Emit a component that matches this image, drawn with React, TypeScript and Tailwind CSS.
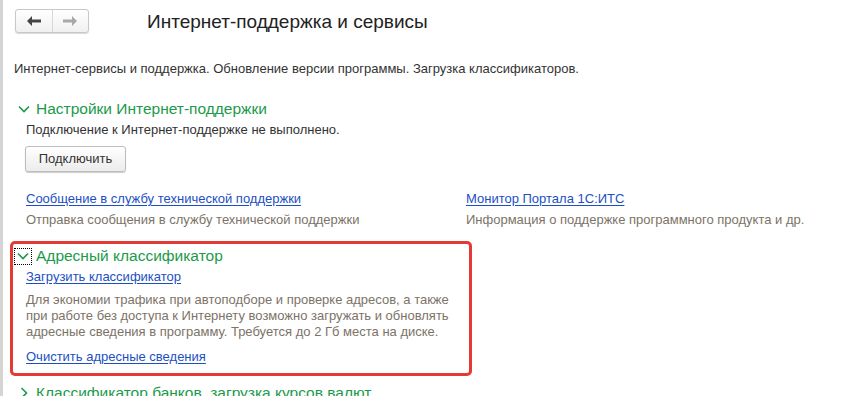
import React from 'react';

const font = { fontFamily: '"Liberation Sans", Arial, sans-serif' };

function ChevronDown() {
  return (
    <svg width="12" height="8" viewBox="0 0 12 8" fill="none">
      <path d="M1 1.5 L6 6.5 L11 1.5" stroke="#1a9a4a" strokeWidth="1.6" />
    </svg>
  );
}

function ChevronRight() {
  return (
    <svg width="8" height="12" viewBox="0 0 8 12" fill="none">
      <path d="M1.5 1 L6.5 6 L1.5 11" stroke="#1a9a4a" strokeWidth="1.6" />
    </svg>
  );
}

function Arrow({ dir, color }: { dir: 'left' | 'right'; color: string }) {
  return (
    <svg width="14" height="10" viewBox="0 0 14 10">
      {dir === 'left' ? (
        <path d="M0 5 L5 0 L5 3.5 L14 3.5 L14 6.5 L5 6.5 L5 10 Z" fill={color} />
      ) : (
        <path d="M14 5 L9 0 L9 3.5 L0 3.5 L0 6.5 L9 6.5 L9 10 Z" fill={color} />
      )}
    </svg>
  );
}

function Link({ children }: { children: React.ReactNode }) {
  return (
    <a className="text-[#1c4fc4] underline underline-offset-2 decoration-[#1c4fc4] cursor-pointer">
      {children}
    </a>
  );
}

export default function App() {
  return (
    <div
      className="w-[868px] h-[396px] overflow-hidden bg-white border-l-[3px] border-[#d4d4d4] text-[13px] text-[#333]"
      style={font}
    >
      {/* header */}
      <div className="flex items-center pt-[9px] pl-[12px]">
        <div className="flex h-[24px] w-[74px] rounded-[3px] border border-[#c8c8c8] bg-gradient-to-b from-white to-[#f0f0f0] shadow-[0_1px_1px_rgba(0,0,0,0.15)]">
          <div className="flex flex-1 items-center justify-center border-r border-[#d8d8d8]">
            <Arrow dir="left" color="#444" />
          </div>
          <div className="flex flex-1 items-center justify-center">
            <Arrow dir="right" color="#a8a8a8" />
          </div>
        </div>
        <h1 className="ml-[58px] text-[19px] text-[#222] leading-none">Интернет-поддержка и сервисы</h1>
      </div>

      <p className="mt-[28px] pl-[11px] leading-[16px]">
        Интернет-сервисы и поддержка. Обновление версии программы. Загрузка классификаторов.
      </p>

      {/* internet support settings */}
      <div className="mt-[22px] pl-[15px] flex items-center gap-[6px]">
        <ChevronDown />
        <span className="text-[15.5px] text-[#1a9a4a] leading-[20px]">Настройки Интернет-поддержки</span>
      </div>
      <p className="mt-[3px] pl-[23px] leading-[16px]">Подключение к Интернет-поддержке не выполнено.</p>
      <div className="pl-[22px] mt-[8px]">
        <button className="h-[26px] w-[101px] rounded-[3px] border border-[#bdbdbd] bg-gradient-to-b from-white to-[#ececec] shadow-[0_1px_1px_rgba(0,0,0,0.2)] text-[#333]">
          Подключить
        </button>
      </div>

      <div className="mt-[19px] flex">
        <div className="w-[463px] pl-[23px]">
          <div className="leading-[16px]"><Link>Сообщение в службу технической поддержки</Link></div>
          <div className="mt-[5px] leading-[16px] text-[#7c7367]">Отправка сообщения в службу технической поддержки</div>
        </div>
        <div>
          <div className="leading-[16px]"><Link>Монитор Портала 1С:ИТС</Link></div>
          <div className="mt-[5px] leading-[16px] text-[#7c7367]">Информация о поддержке программного продукта и др.</div>
        </div>
      </div>

      {/* address classifier, highlighted */}
      <div className="mt-[13px] ml-[7px] w-[462px] h-[135px] rounded-[5px] border-[3px] border-[#e53935] pl-[1px] pt-[2px]">
        <div className="flex items-center gap-[4px]">
          <div className="w-[18px] h-[17px] border border-dotted border-black flex items-center justify-center">
            <ChevronDown />
          </div>
          <span className="text-[15.5px] text-[#1a9a4a] leading-[20px]">Адресный классификатор</span>
        </div>
        <div className="pl-[12px]">
          <div className="mt-[3px] leading-[16px]"><Link>Загрузить классификатор</Link></div>
          <p className="mt-[7px] leading-[16px] text-[#7c7367]">
            Для экономии трафика при автоподборе и проверке адресов, а также
            <br />
            при работе без доступа к Интернету возможно загружать и обновлять
            <br />
            адресные сведения в программу. Требуется до 2 Гб места на диске.
          </p>
          <div className="mt-[9px] leading-[16px]"><Link>Очистить адресные сведения</Link></div>
        </div>
      </div>

      <div className="mt-[7px] pl-[17px] flex items-center gap-[8px]">
        <ChevronRight />
        <span className="text-[15.5px] text-[#1a9a4a] leading-[20px]">Классификатор банков, загрузка курсов валют</span>
      </div>
    </div>
  );
}
